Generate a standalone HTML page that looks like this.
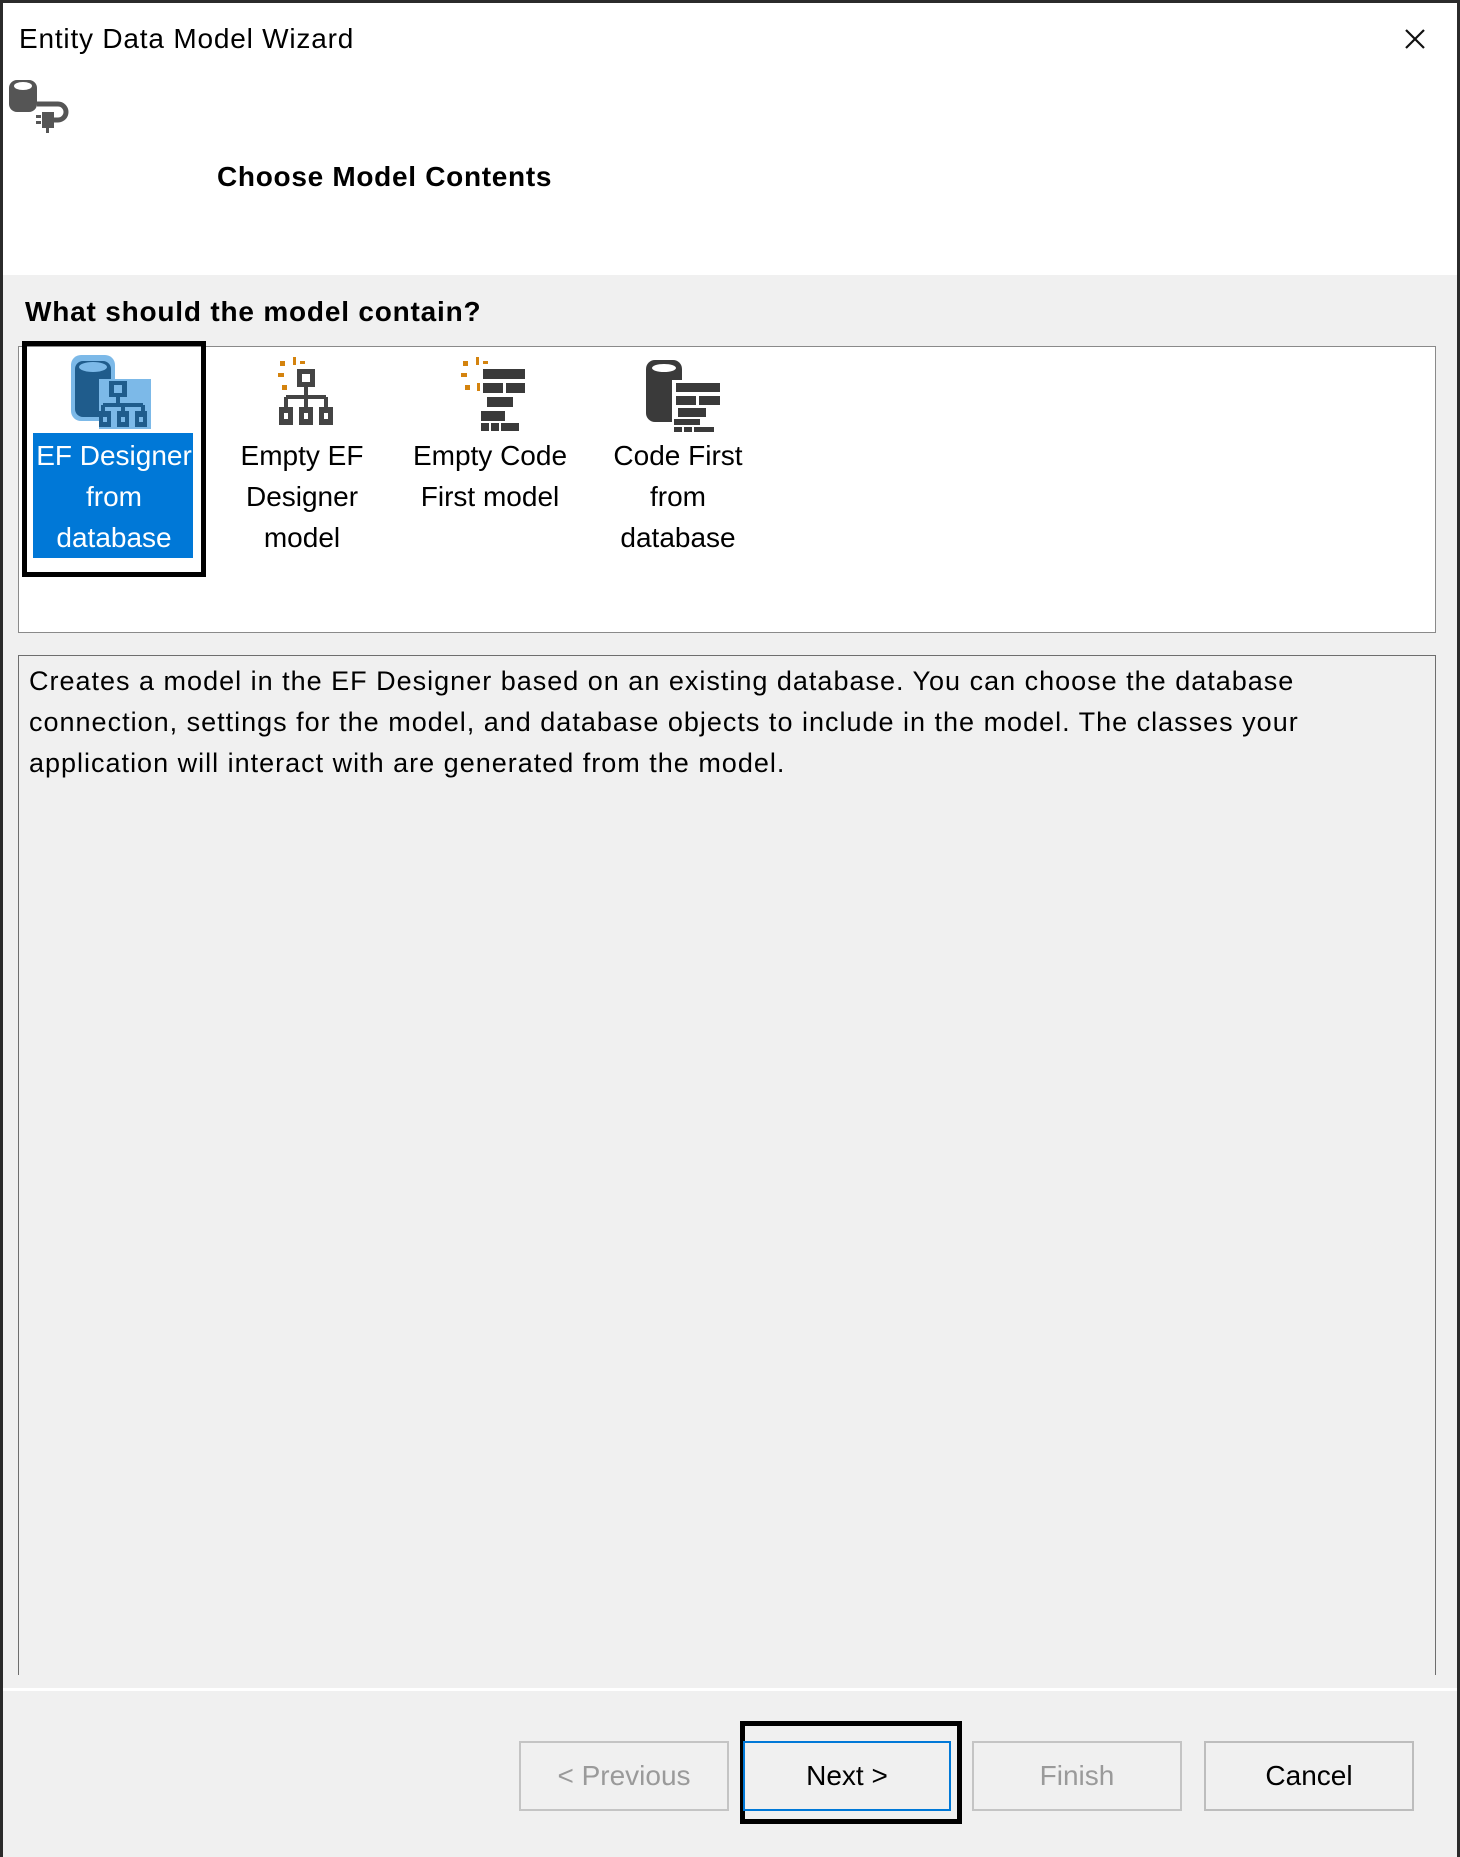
<!DOCTYPE html>
<html><head><meta charset="utf-8"><style>
*{margin:0;padding:0;box-sizing:border-box}
body{width:1460px;height:1857px;background:#fff;font-family:"Liberation Sans",sans-serif;position:relative;overflow:hidden}
.win{position:absolute;left:0;top:0;width:1460px;height:1857px;border-left:3px solid #2b2b2b;border-top:3px solid #2b2b2b;border-right:3px solid #2b2b2b;background:#f0f0f0}
.hdr{position:absolute;left:0;top:0;right:0;height:272px;background:#fff}
.t{position:absolute;white-space:nowrap;color:#000}
.list{position:absolute;left:15px;top:343px;width:1418px;height:287px;background:#fff;border:1px solid #8a8a8a}
.desc{position:absolute;left:15px;top:652px;width:1418px;height:1020px;border:1px solid #6e6e6e;border-bottom:none}
.item{position:absolute;top:432px;width:180px;text-align:center;font-size:28px;line-height:41px;color:#000}
.btn{position:absolute;top:1738px;height:70px;width:210px;border:2px solid #c4c4c4;background:#f0f0f0;font-size:28px;text-align:center;line-height:66px}
</style></head><body>
<div class="win">
<div class="hdr"></div>
<div class="t" style="left:16px;top:20px;font-size:28px;letter-spacing:0.8px">Entity Data Model Wizard</div>
<svg style="position:absolute;left:1400px;top:24px" width="24" height="24" viewBox="0 0 24 24"><path d="M3 3L21 21M21 3L3 21" stroke="#111" stroke-width="2.2"/></svg>
<svg style="position:absolute;left:3px;top:75px" width="66" height="55" viewBox="0 0 66 55"><rect x="3" y="2" width="28" height="32" rx="8" fill="#555"/><ellipse cx="17" cy="8" rx="9" ry="4" fill="#fff"/><path d="M31 26H52a8 8 0 0 1 0 16H47" stroke="#555" stroke-width="5" fill="none"/><rect x="36" y="34" width="12" height="16" fill="#555"/><rect x="30" y="37" width="5" height="3" fill="#555"/><rect x="30" y="43" width="5" height="3" fill="#555"/><rect x="40" y="50" width="3" height="5" fill="#555"/></svg>
<div class="t" style="left:214px;top:158px;font-size:28px;font-weight:bold;letter-spacing:0.7px">Choose Model Contents</div>
<div class="t" style="left:22px;top:293px;font-size:28px;font-weight:bold;letter-spacing:0.8px">What should the model contain?</div>
<div class="list"></div>
<div style="position:absolute;left:19px;top:338px;width:184px;height:236px;border:5px solid #000"></div>
<div style="position:absolute;left:30px;top:430px;width:160px;height:125px;background:#0078d7"></div>
<svg style="position:absolute;left:66px;top:350px" width="86" height="78" viewBox="0 0 86 78"><rect x="2" y="2" width="44" height="66" rx="10" fill="#7cb9e8"/><rect x="6" y="8" width="36" height="56" rx="8" fill="#1f5c8c"/><ellipse cx="24" cy="14" rx="14" ry="5" fill="#7cb9e8"/><rect x="30" y="26" width="52" height="50" fill="#7cb9e8"/><rect x="40" y="28" width="18" height="16" fill="#1f5c8c"/><rect x="45" y="32" width="8" height="8" fill="#7cb9e8"/><path d="M49 44V52M34 52H74M34 52V60M54 52V60M74 52V60" stroke="#1f5c8c" stroke-width="4" fill="none"/><rect x="30" y="58" width="12" height="16" fill="#1f5c8c"/><rect x="48" y="58" width="12" height="16" fill="#1f5c8c"/><rect x="66" y="58" width="12" height="16" fill="#1f5c8c"/><rect x="34" y="64" width="4" height="5" fill="#7cb9e8"/><rect x="52" y="64" width="4" height="5" fill="#7cb9e8"/><rect x="70" y="64" width="4" height="5" fill="#7cb9e8"/></svg>
<svg style="position:absolute;left:273px;top:352px" width="60" height="72" viewBox="0 0 60 72"><g fill="#d4830e"><rect x="4" y="6" width="5" height="5"/><rect x="17" y="2" width="3" height="8"/><rect x="24" y="6" width="5" height="3"/><rect x="2" y="18" width="6" height="4"/><rect x="6" y="30" width="5" height="5"/></g><rect x="21" y="14" width="18" height="18" fill="#444"/><rect x="26" y="19" width="8" height="8" fill="#fff"/><path d="M30 32V42M10 42H50M10 42V52M30 42V52M50 42V52" stroke="#444" stroke-width="4" fill="none"/><g fill="#444"><rect x="3" y="52" width="14" height="18"/><rect x="23" y="52" width="14" height="18"/><rect x="43" y="52" width="14" height="18"/></g><g fill="#fff"><rect x="8" y="58" width="4" height="6"/><rect x="28" y="58" width="4" height="6"/><rect x="48" y="58" width="4" height="6"/></g></svg>
<svg style="position:absolute;left:456px;top:352px" width="70" height="76" viewBox="0 0 70 76"><g fill="#d4830e"><rect x="4" y="6" width="5" height="5"/><rect x="17" y="2" width="3" height="8"/><rect x="24" y="6" width="5" height="3"/><rect x="2" y="18" width="6" height="4"/><rect x="6" y="30" width="5" height="5"/><rect x="18" y="28" width="3" height="8"/></g><g fill="#3a3a3a"><rect x="24" y="14" width="42" height="10"/><rect x="24" y="28" width="20" height="10"/><rect x="47" y="28" width="19" height="10"/><rect x="28" y="42" width="26" height="10"/><rect x="22" y="56" width="24" height="10"/><rect x="22" y="68" width="8" height="8"/><rect x="32" y="68" width="8" height="8"/><rect x="42" y="68" width="18" height="8"/></g></svg>
<svg style="position:absolute;left:641px;top:355px" width="78" height="74" viewBox="0 0 78 74"><rect x="2" y="2" width="36" height="62" rx="9" fill="#3a3a3a"/><ellipse cx="20" cy="10" rx="12" ry="4" fill="#fff"/><rect x="28" y="22" width="50" height="52" fill="#fff"/><g fill="#3a3a3a"><rect x="32" y="25" width="44" height="9"/><rect x="32" y="38" width="20" height="9"/><rect x="55" y="38" width="21" height="9"/><rect x="34" y="50" width="28" height="9"/><rect x="30" y="61" width="26" height="6"/><rect x="30" y="69" width="8" height="5"/><rect x="40" y="69" width="8" height="5"/><rect x="50" y="69" width="20" height="5"/></g></svg>
<div class="item" style="left:21px;color:#fff">EF Designer<br>from<br>database</div>
<div class="item" style="left:209px">Empty EF<br>Designer<br>model</div>
<div class="item" style="left:397px">Empty Code<br>First model</div>
<div class="item" style="left:585px">Code First<br>from<br>database</div>
<div class="desc"></div>
<div class="t" style="left:26px;top:658px;font-size:27px;line-height:41px;letter-spacing:1px">Creates a model in the EF Designer based on an existing database. You can choose the database<br>connection, settings for the model, and database objects to include in the model. The classes your<br>application will interact with are generated from the model.</div>
<div style="position:absolute;left:0;right:0;top:1685px;height:3px;background:#fff"></div>
<div class="btn" style="left:516px;color:#9a9a9a">&lt; Previous</div>
<div style="position:absolute;left:737px;top:1718px;width:222px;height:103px;border:5px solid #000"></div>
<div class="btn" style="left:740px;width:208px;border-color:#0078d7;background:transparent">Next &gt;</div>
<div class="btn" style="left:969px;color:#9a9a9a">Finish</div>
<div class="btn" style="left:1201px;border-color:#bdbdbd">Cancel</div>
</div>
</body></html>
